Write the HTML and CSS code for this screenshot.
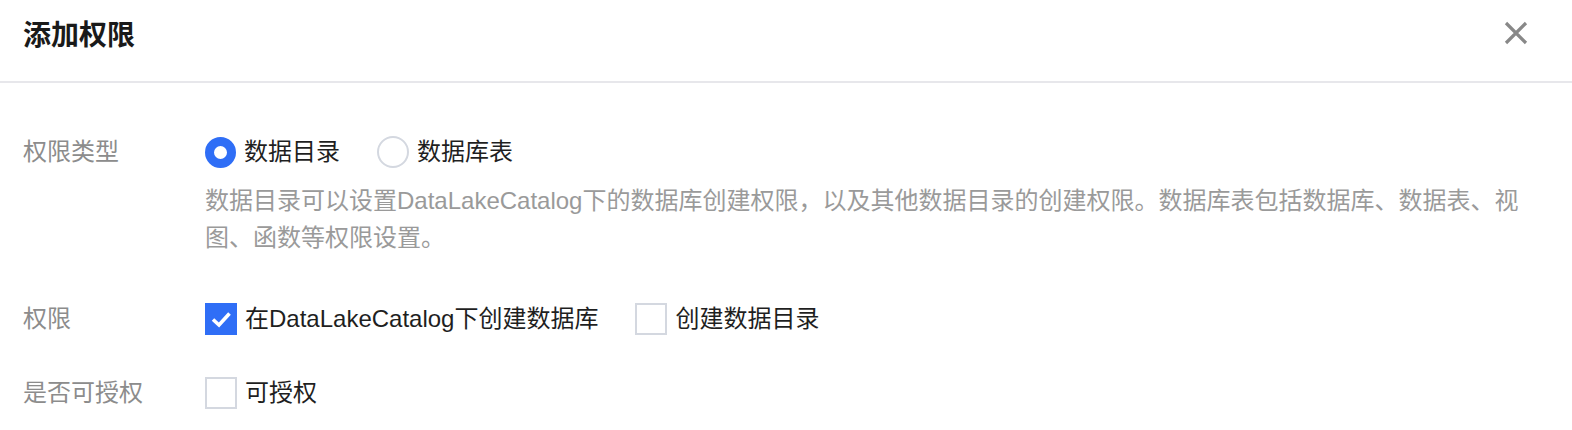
FILE: index.html
```html
<!DOCTYPE html>
<html>
<head>
    <title>添加权限</title>
    <link rel="stylesheet" href="styles.css">
</head>
<body>
    <div class="dialog">
        <div class="header">
            <h1 class="title">添加权限</h1>
            <button class="close" aria-label="关闭">
                <svg width="24" height="24" viewBox="0 0 24 24">
                    <path d="M2 2 L22 22 M22 2 L2 22" stroke="#888" stroke-width="3.2" fill="none"/>
                </svg>
            </button>
        </div>

        <div class="body">
            <div class="form-item">
                <div class="label">权限类型</div>
                <div class="control">
                    <div class="options">
                        <label class="option"><span class="radio checked"></span>数据目录</label>
                        <label class="option"><span class="radio"></span>数据库表</label>
                    </div>
                    <p class="help">数据目录可以设置DataLakeCatalog下的数据库创建权限，以及其他数据目录的创建权限。数据库表包括数据库、数据表、视图、函数等权限设置。</p>
                </div>
            </div>

            <div class="form-item">
                <div class="label">权限</div>
                <div class="control">
                    <div class="options">
                        <label class="option">
                            <span class="checkbox checked">
                                <svg class="tick" width="24" height="24" viewBox="0 0 24 24"><path d="M4 12.5 L10 18 L20.5 6.5" stroke="#fff" stroke-width="3.6" fill="none"/></svg>
                            </span>在DataLakeCatalog下创建数据库
                        </label>
                        <label class="option"><span class="checkbox"></span>创建数据目录</label>
                    </div>
                </div>
            </div>

            <div class="form-item">
                <div class="label">是否可授权</div>
                <div class="control">
                    <div class="options">
                        <label class="option"><span class="checkbox"></span>可授权</label>
                    </div>
                </div>
            </div>
        </div>
    </div>
</body>
</html>
```

FILE: styles.css
```css
body {
    margin: 0;
    background: #fff;
    font-family: "Liberation Sans", "Noto Sans CJK SC", sans-serif;
    color: #1f1f1f;
    overflow: hidden;
}
.header {
    height: 81px;
    display: flex;
    align-items: center;
    justify-content: space-between;
    padding: 0 44px 0 23px;
    border-bottom: 2px solid #e7e7eb;
}
.title {
    margin: 0 0 16px 0;
    font-size: 28px;
    font-weight: bold;
    color: #1a1a1a;
}
.close {
    background: none;
    border: 0;
    padding: 0;
    margin: 0 0 16px 0;
    width: 24px;
    height: 24px;
    cursor: pointer;
}
.body {
    padding: 53px 23px 0 23px;
}
.form-item {
    display: grid;
    grid-template-columns: 182px 1fr;
    margin-bottom: 42px;
}
.label {
    font-size: 24px;
    color: #8c8c8c;
    line-height: 32px;
}
.options {
    display: flex;
    gap: 37px;
}
.option {
    display: flex;
    align-items: center;
    gap: 8px;
    font-size: 24px;
    line-height: 32px;
    color: #1f1f1f;
}
.radio {
    width: 28px;
    height: 28px;
    border: 2px solid #d4d8e0;
    border-radius: 50%;
    box-sizing: content-box;
}
.radio.checked {
    width: 13px;
    height: 13px;
    border: 9.5px solid #2f6ef6;
}
.checkbox {
    width: 28px;
    height: 28px;
    border: 2px solid #d4d8e0;
    display: flex;
    align-items: center;
    justify-content: center;
    flex-shrink: 0;
}
.checkbox.checked {
    background: #2f6ef6;
    border-color: #2f6ef6;
}
.tick {
    flex-shrink: 0;
}
.help {
    margin: 14px 0 5px 0;
    font-size: 24px;
    line-height: 37px;
    color: #9a9a9a;
    padding-right: 20px;
}
```
